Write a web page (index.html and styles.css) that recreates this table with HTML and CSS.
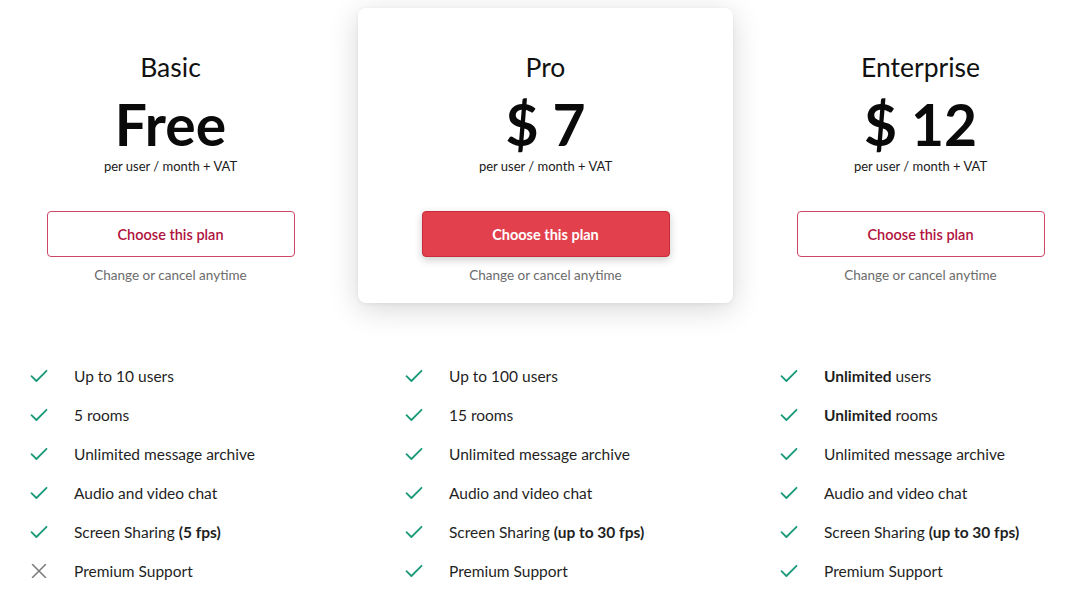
FILE: index.html
```html
<!DOCTYPE html>
<html lang="en">
<head>
<meta charset="utf-8">
<title>Pricing</title>
<link rel="stylesheet" href="styles.css">
</head>
<body>
<div class="page">
  <div class="plans">
    <div class="plan">
      <h2 class="plan-name">Basic</h2>
      <div class="price">Free</div>
      <div class="per">per user / month + VAT</div>
      <button class="btn btn-outline">Choose this plan</button>
      <div class="note">Change or cancel anytime</div>
    </div>
    <div class="plan plan-featured">
      <h2 class="plan-name">Pro</h2>
      <div class="price">$ 7</div>
      <div class="per">per user / month + VAT</div>
      <button class="btn btn-solid">Choose this plan</button>
      <div class="note">Change or cancel anytime</div>
    </div>
    <div class="plan">
      <h2 class="plan-name">Enterprise</h2>
      <div class="price">$ 12</div>
      <div class="per">per user / month + VAT</div>
      <button class="btn btn-outline">Choose this plan</button>
      <div class="note">Change or cancel anytime</div>
    </div>
  </div>
  <div class="features">
    <ul class="feature-list">
      <li><svg class="ico check" viewBox="0 0 18 14"><path d="M1.5 7.2 L6.4 12 L16.5 1.8"/></svg><span>Up to 10 users</span></li>
      <li><svg class="ico check" viewBox="0 0 18 14"><path d="M1.5 7.2 L6.4 12 L16.5 1.8"/></svg><span>5 rooms</span></li>
      <li><svg class="ico check" viewBox="0 0 18 14"><path d="M1.5 7.2 L6.4 12 L16.5 1.8"/></svg><span>Unlimited message archive</span></li>
      <li><svg class="ico check" viewBox="0 0 18 14"><path d="M1.5 7.2 L6.4 12 L16.5 1.8"/></svg><span>Audio and video chat</span></li>
      <li><svg class="ico check" viewBox="0 0 18 14"><path d="M1.5 7.2 L6.4 12 L16.5 1.8"/></svg><span>Screen Sharing <b>(5 fps)</b></span></li>
      <li><svg class="ico cross" viewBox="0 0 18 14"><path d="M2.5 0.5 L15.5 13.5 M15.5 0.5 L2.5 13.5"/></svg><span>Premium Support</span></li>
    </ul>
    <ul class="feature-list">
      <li><svg class="ico check" viewBox="0 0 18 14"><path d="M1.5 7.2 L6.4 12 L16.5 1.8"/></svg><span>Up to 100 users</span></li>
      <li><svg class="ico check" viewBox="0 0 18 14"><path d="M1.5 7.2 L6.4 12 L16.5 1.8"/></svg><span>15 rooms</span></li>
      <li><svg class="ico check" viewBox="0 0 18 14"><path d="M1.5 7.2 L6.4 12 L16.5 1.8"/></svg><span>Unlimited message archive</span></li>
      <li><svg class="ico check" viewBox="0 0 18 14"><path d="M1.5 7.2 L6.4 12 L16.5 1.8"/></svg><span>Audio and video chat</span></li>
      <li><svg class="ico check" viewBox="0 0 18 14"><path d="M1.5 7.2 L6.4 12 L16.5 1.8"/></svg><span>Screen Sharing <b>(up to 30 fps)</b></span></li>
      <li><svg class="ico check" viewBox="0 0 18 14"><path d="M1.5 7.2 L6.4 12 L16.5 1.8"/></svg><span>Premium Support</span></li>
    </ul>
    <ul class="feature-list">
      <li><svg class="ico check" viewBox="0 0 18 14"><path d="M1.5 7.2 L6.4 12 L16.5 1.8"/></svg><span><b>Unlimited</b> users</span></li>
      <li><svg class="ico check" viewBox="0 0 18 14"><path d="M1.5 7.2 L6.4 12 L16.5 1.8"/></svg><span><b>Unlimited</b> rooms</span></li>
      <li><svg class="ico check" viewBox="0 0 18 14"><path d="M1.5 7.2 L6.4 12 L16.5 1.8"/></svg><span>Unlimited message archive</span></li>
      <li><svg class="ico check" viewBox="0 0 18 14"><path d="M1.5 7.2 L6.4 12 L16.5 1.8"/></svg><span>Audio and video chat</span></li>
      <li><svg class="ico check" viewBox="0 0 18 14"><path d="M1.5 7.2 L6.4 12 L16.5 1.8"/></svg><span>Screen Sharing <b>(up to 30 fps)</b></span></li>
      <li><svg class="ico check" viewBox="0 0 18 14"><path d="M1.5 7.2 L6.4 12 L16.5 1.8"/></svg><span>Premium Support</span></li>
    </ul>
  </div>
</div>
</body>
</html>
```

FILE: styles.css
```css
html, body {
  margin: 0;
  padding: 0;
  background: #ffffff;
  overflow: hidden;
}
body {
  font-family: "Lato", "Noto Sans", "Liberation Sans", sans-serif;
  color: #1a1a1a;
  width: 1070px;
  height: 606px;
}
.page {
  width: 1125px;
  margin-left: -17px;
}
.plans {
  display: grid;
  grid-template-columns: 375px 375px 375px;
  padding-top: 8px;
}
.plan {
  display: flex;
  flex-direction: column;
  align-items: center;
  padding: 43px 0 19px;
  border-radius: 8px;
}
.plan-featured {
  background: #ffffff;
  box-shadow: 0 6px 30px rgba(0, 0, 0, 0.16), 0 1px 4px rgba(0, 0, 0, 0.06);
}
.plan-name {
  margin: 0;
  font-size: 26.5px;
  line-height: 32px;
  font-weight: 400;
  color: #111;
}
.price {
  margin-top: 11px;
  font-size: 57px;
  line-height: 60px;
  font-weight: 700;
  color: #0a0a0a;
}
.per {
  margin-top: 3px;
  font-size: 13px;
  line-height: 18px;
  color: #1a1a1a;
}
.btn {
  margin-top: 36px;
  width: 248px;
  height: 46px;
  border-radius: 4px;
  font-family: inherit;
  font-size: 14.5px;
  font-weight: 600;
  cursor: pointer;
}
.btn-outline {
  background: #fff;
  border: 1px solid #cc4766;
  color: #b0123d;
}
.btn-solid {
  background: #e2404d;
  border: 1px solid #c92b3a;
  color: #ffffff;
  font-weight: 700;
  box-shadow: 0 3px 8px rgba(0, 0, 0, 0.2);
}
.note {
  margin-top: 9px;
  font-size: 13.5px;
  line-height: 18px;
  color: #6b6b6b;
}
.features {
  display: grid;
  grid-template-columns: 375px 375px 375px;
  padding-top: 53px;
}
.feature-list {
  list-style: none;
  margin: 0;
  padding: 0 0 0 47px;
}
.feature-list li {
  display: flex;
  align-items: center;
  height: 39px;
  font-size: 15.5px;
  color: #1f1f1f;
}
.feature-list b {
  font-weight: 700;
}
.ico {
  width: 18px;
  height: 14px;
  margin-right: 26px;
  flex: none;
  fill: none;
  stroke-width: 1.8;
  stroke-linecap: round;
  stroke-linejoin: round;
}
.check {
  stroke: #1b9a7a;
}
.cross {
  stroke: #7a7a7a;
  stroke-width: 1.5;
}
```
